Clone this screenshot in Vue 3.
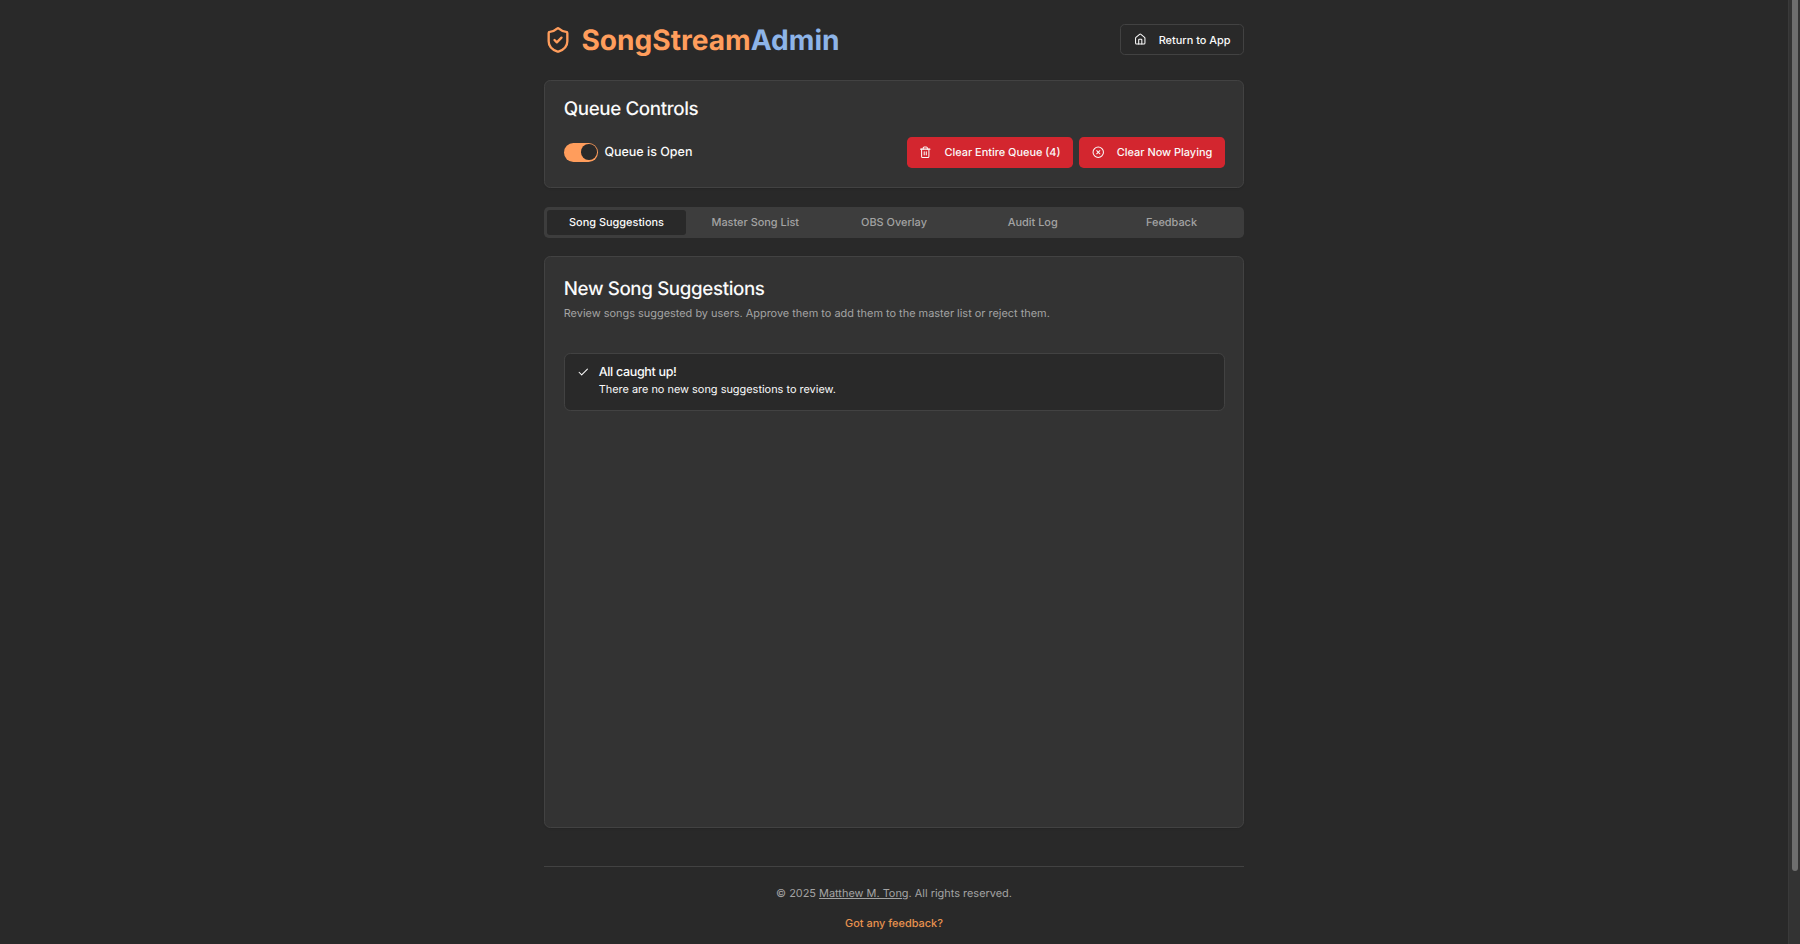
<script setup>
import { ref } from 'vue';

const tabs = ['Song Suggestions', 'Master Song List', 'OBS Overlay', 'Audit Log', 'Feedback'];
const activeTab = ref('Song Suggestions');
const queueOpen = ref(true);
</script>

<template>
  <div class="shell">
    <div class="scroller">
      <div class="page">
        <header class="top">
          <h1 class="brand">
            <svg class="brand-icon" viewBox="0 0 24 24" fill="none" stroke="currentColor" stroke-width="2" stroke-linecap="round" stroke-linejoin="round">
              <path d="M20 13c0 5-3.5 7.5-7.66 8.95a1 1 0 0 1-.67-.01C7.5 20.5 4 18 4 13V6a1 1 0 0 1 1-1c2 0 4.5-1.2 6.24-2.72a1.17 1.17 0 0 1 1.52 0C14.51 3.81 17 5 19 5a1 1 0 0 1 1 1z" />
              <path d="m9 12 2 2 4-4" />
            </svg>
            <span>SongStream<span class="brand-accent">Admin</span></span>
          </h1>
          <button class="btn btn-outline">
            <svg class="icon" viewBox="0 0 24 24" fill="none" stroke="currentColor" stroke-width="2" stroke-linecap="round" stroke-linejoin="round">
              <path d="M15 21v-8a1 1 0 0 0-1-1h-4a1 1 0 0 0-1 1v8" />
              <path d="M3 10a2 2 0 0 1 .709-1.528l7-5.999a2 2 0 0 1 2.582 0l7 5.999A2 2 0 0 1 21 10v9a2 2 0 0 1-2 2H5a2 2 0 0 1-2-2z" />
            </svg>
            Return to App
          </button>
        </header>

        <section class="card controls">
          <h2 class="card-title">Queue Controls</h2>
          <div class="controls-row">
            <label class="switch-label" @click="queueOpen = !queueOpen">
              <span class="switch" :class="{ on: queueOpen }"><span class="thumb"></span></span>
              <span class="switch-text">Queue is {{ queueOpen ? 'Open' : 'Closed' }}</span>
            </label>
            <div class="actions">
              <button class="btn btn-danger">
                <svg class="icon" viewBox="0 0 24 24" fill="none" stroke="currentColor" stroke-width="2" stroke-linecap="round" stroke-linejoin="round">
                  <path d="M3 6h18" />
                  <path d="M19 6v14c0 1-1 2-2 2H7c-1 0-2-1-2-2V6" />
                  <path d="M8 6V4c0-1 1-2 2-2h4c1 0 2 1 2 2v2" />
                  <line x1="10" x2="10" y1="11" y2="17" />
                  <line x1="14" x2="14" y1="11" y2="17" />
                </svg>
                Clear Entire Queue (4)
              </button>
              <button class="btn btn-danger">
                <svg class="icon" viewBox="0 0 24 24" fill="none" stroke="currentColor" stroke-width="2" stroke-linecap="round" stroke-linejoin="round">
                  <circle cx="12" cy="12" r="10" />
                  <path d="m15 9-6 6" />
                  <path d="m9 9 6 6" />
                </svg>
                Clear Now Playing
              </button>
            </div>
          </div>
        </section>

        <nav class="tabs">
          <button v-for="tab in tabs" :key="tab" class="tab" :class="{ active: tab === activeTab }" @click="activeTab = tab">
            {{ tab }}
          </button>
        </nav>

        <section class="card panel">
          <h2 class="card-title panel-title">New Song Suggestions</h2>
          <p class="card-desc">Review songs suggested by users. Approve them to add them to the master list or reject them.</p>
          <div class="alert">
            <svg class="icon" viewBox="0 0 24 24" fill="none" stroke="currentColor" stroke-width="2" stroke-linecap="round" stroke-linejoin="round">
              <path d="M20 6 9 17l-5-5" />
            </svg>
            <div>
              <div class="alert-title">All caught up!</div>
              <div class="alert-text">There are no new song suggestions to review.</div>
            </div>
          </div>
        </section>

        <footer class="foot">
          <p class="copy">© 2025 <a class="author" href="#">Matthew M. Tong</a>. All rights reserved.</p>
          <a class="feedback" href="#">Got any feedback?</a>
        </footer>
      </div>
    </div>
    <div class="scrollbar"><div class="scrollbar-thumb"></div></div>
  </div>
</template>

<style scoped>
.shell {
  display: flex;
  height: 100vh;
  background: #292929;
  font-family: Inter, sans-serif;
  color: #fafafa;
  text-rendering: geometricPrecision;
}

.scroller {
  flex: 1;
  min-width: 0;
  overflow-y: auto;
  scrollbar-width: none;
}

.scrollbar {
  width: 12px;
  box-sizing: border-box;
  padding: 0 2px 0 3px;
  background: #333333;
  border-left: 1px solid #3a3a3a;
  flex: none;
}

.scrollbar-thumb {
  height: 871px;
  background: #6e6e6e;
  border-radius: 0 0 3px 3px;
}

.page {
  width: 700px;
  margin: 0 auto;
  padding: 24px 0 92px;
  display: flex;
  flex-direction: column;
}

.top {
  display: flex;
  align-items: center;
  justify-content: space-between;
  height: 31.25px;
  margin-bottom: 24.5px;
}

.brand {
  margin: 0;
  display: flex;
  align-items: center;
  gap: 9.4px;
  font-size: 28.125px;
  font-weight: 700;
  color: #ff9d5c;
}

.brand-icon {
  width: 28px;
  height: 28px;
}

.brand-accent {
  color: #8db4e8;
}

.btn {
  display: inline-flex;
  align-items: center;
  justify-content: center;
  gap: 12.5px;
  height: 31.25px;
  padding: 0 12.5px;
  border-radius: 4.7px;
  font-family: Inter, sans-serif;
  font-size: 10.9375px;
  font-weight: 500;
  text-rendering: geometricPrecision;
  cursor: pointer;
}

.btn-outline {
  background: #292929;
  border: 1px solid #424242;
  color: #fafafa;
}

.btn-danger {
  background: #d3262f;
  border: none;
  color: #fafafa;
  padding-bottom: 0.6px;
}

.icon {
  width: 12.5px;
  height: 12.5px;
  flex: none;
}

.card {
  background: #333333;
  border: 1px solid #424242;
  border-radius: 6.25px;
  padding: 18.75px 18.25px 18.25px 18.75px;
  box-shadow: 0 1px 2px rgba(0, 0, 0, 0.1);
}

.card-title {
  margin: 0;
  font-size: 18.75px;
  line-height: 18.75px;
  font-weight: 550;
  letter-spacing: -0.02em;
}

.panel-title {
  line-height: 25px;
}

.controls {
  padding-bottom: 19.25px;
}

.controls-row {
  display: flex;
  align-items: center;
  justify-content: space-between;
  margin-top: 18.25px;
}

.switch-label {
  display: flex;
  align-items: center;
  gap: 6.25px;
  font-size: 12.5px;
  font-weight: 500;
  cursor: pointer;
}

.switch-text {
  padding-top: 1.5px;
}

.switch {
  width: 34.375px;
  height: 18.75px;
  border-radius: 9.4px;
  background: #ff9d5c;
  display: flex;
  align-items: center;
  padding: 1.56px;
  box-sizing: border-box;
}

.switch.on {
  justify-content: flex-end;
}

.thumb {
  width: 15.625px;
  height: 15.625px;
  border-radius: 50%;
  background: #292929;
}

.actions {
  display: flex;
  gap: 6.25px;
}

.tabs {
  margin-top: 18.75px;
  display: grid;
  grid-template-columns: repeat(5, 1fr);
  height: 31.25px;
  padding: 3.125px;
  box-sizing: border-box;
  background: #3d3d3d;
  border-radius: 4.7px;
}

.tab {
  border: none;
  background: none;
  border-radius: 3px;
  font-family: Inter, sans-serif;
  font-size: 10.9375px;
  font-weight: 500;
  color: #a3a3a3;
  text-rendering: geometricPrecision;
  cursor: pointer;
}

.tab.active {
  background: #292929;
  color: #fafafa;
}

.panel {
  margin-top: 18px;
  height: 572.25px;
  box-sizing: border-box;
}

.card-desc {
  margin: 5.2px 0 0;
  font-size: 10.9375px;
  line-height: 15.625px;
  color: #a3a3a3;
}

.alert {
  margin-top: 31.25px;
  display: flex;
  gap: 9.4px;
  padding: 12.5px 12.5px 12.5px 12px;
  background: #292929;
  border: 1px solid #424242;
  border-radius: 6.25px;
}

.alert-title {
  font-size: 12.5px;
  line-height: 12.5px;
  font-weight: 500;
  letter-spacing: -0.025em;
  padding-top: 0.75px;
  margin-bottom: 2.4px;
}

.alert-text {
  font-size: 10.9375px;
  line-height: 15.625px;
}

.foot {
  margin-top: 37.5px;
  padding-top: 18.75px;
  border-top: 1px solid #424242;
  display: flex;
  flex-direction: column;
  align-items: center;
  font-size: 10.9375px;
  line-height: 15.625px;
  color: #a3a3a3;
}

.copy {
  margin: 0;
}

.author {
  color: inherit;
}

.feedback {
  margin-top: 14.5px;
  color: #e8924f;
  font-weight: 500;
  text-decoration: none;
}
</style>

<style>
html,
body {
  background: #292929;
}
</style>
